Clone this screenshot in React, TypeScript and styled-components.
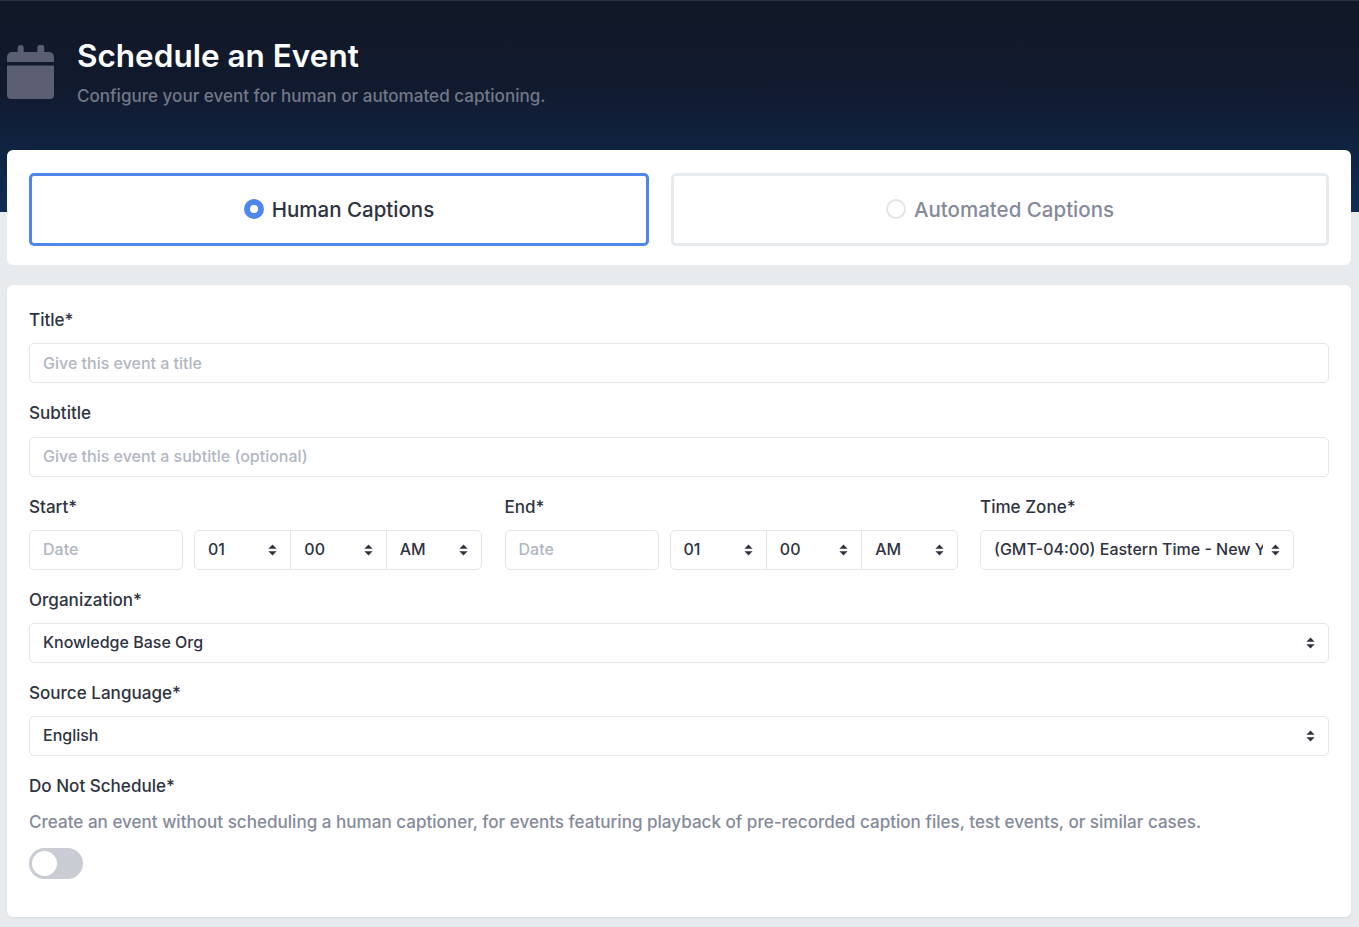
import styled, { createGlobalStyle } from 'styled-components'

const GlobalStyle = createGlobalStyle`
  * { box-sizing: border-box; }
  body {
    margin: 0;
    background: #e8ebee;
    font-family: Inter, "Noto Sans", sans-serif;
    color: #2f3340;
  }
`
const Hero = styled.header`
  height: 212px;
  padding: 37px 7px 0;
  display: flex;
  align-items: flex-start;
  gap: 23px;
  border-top: 1px solid #2b3040;
  background: linear-gradient(180deg, #111827 0%, #111a2e 40%, #0f2d55 100%);
`
const HeroIcon = styled.svg`
  width: 47px;
  height: 54px;
  margin-top: 7px;
  flex: none;
`
const HeroTitle = styled.h1`
  margin: 0;
  font-size: 31.5px;
  line-height: 36px;
  font-weight: 600;
  color: #fff;
`
const HeroSub = styled.p`
  margin: 10px 0 0;
  font-size: 17.07px;
  line-height: 24px;
  font-weight: 500;
  color: #737887;
`
const Main = styled.main`
  margin-top: -62px;
  padding: 0 8px 10px 7px;
  display: flex;
  flex-direction: column;
  gap: 20px;
  position: relative;
`
const Card = styled.section`
  background: #fff;
  border-radius: 6px;
`
const TypeCard = styled(Card)`
  height: 115px;
  padding: 23px 22px 19px;
  display: grid;
  grid-template-columns: 620px 658px;
  gap: 22px;
`
const TypeTile = styled.div<{ $active?: boolean }>`
  display: flex;
  align-items: center;
  justify-content: center;
  gap: 8px;
  padding-bottom: 1px;
  border: 3px solid ${p => (p.$active ? '#4f86ec' : '#e8ebee')};
  border-radius: 5px;
  font-size: 20.5px;
  font-weight: 500;
  color: ${p => (p.$active ? '#2f3340' : '#858a9b')};
`
const Radio = styled.span<{ $active?: boolean }>`
  width: 20px;
  height: 20px;
  border-radius: 50%;
  background: #fff;
  border: ${p => (p.$active ? '6px solid #4f86ec' : '2px solid #e2e5ea')};
`
const FormCard = styled(Card)`
  height: 632px;
  padding: 23px 22px 0;
  box-shadow: 0 1px 2px rgba(30, 40, 60, 0.08);
`
const Field = styled.div`
  margin-bottom: 18px;
`
const Label = styled.label`
  display: block;
  margin-bottom: 11.25px;
  font-size: 17.07px;
  line-height: 24px;
  font-weight: 500;
  color: #2f3340;
`
const TextInput = styled.input`
  display: block;
  width: 100%;
  height: 40px;
  padding: 0 13px 1px;
  border: 1px solid #e2e5ea;
  border-radius: 5px;
  background: #fff;
  font: 500 16px Inter, "Noto Sans", sans-serif;
  color: #2f3340;
  outline: none;
  &::placeholder {
    color: #b1b6c2;
    opacity: 1;
  }
`
const DateInput = styled(TextInput)`
  width: 154px;
  flex: none;
`
const DateRow = styled.div`
  display: grid;
  grid-template-columns: 453px 453px 1fr;
  gap: 22.5px;
`
const DateTime = styled.div`
  display: flex;
  gap: 11px;
`
const TimeGroup = styled.div`
  flex: 1;
  display: grid;
  grid-template-columns: repeat(3, 1fr);
  height: 40px;
  border: 1px solid #e2e5ea;
  border-radius: 5px;
`
const SelectWrap = styled.div<{ $width?: string }>`
  position: relative;
  width: ${p => p.$width ?? '100%'};
  & + & {
    border-left: 1px solid #e2e5ea;
  }
`
const SelectBox = styled.select<{ $bare?: boolean }>`
  display: block;
  width: 100%;
  height: ${p => (p.$bare ? '38px' : '40px')};
  padding: 0 30px ${p => (p.$bare ? '1px' : '2px')} 13px;
  appearance: none;
  border: ${p => (p.$bare ? 'none' : '1px solid #e2e5ea')};
  border-radius: 5px;
  background: transparent;
  font: 500 16px Inter, "Noto Sans", sans-serif;
  color: #2f3340;
  outline: none;
`
const Chevrons = styled.svg<{ $bare?: boolean }>`
  position: absolute;
  right: ${p => (p.$bare ? '13px' : '14px')};
  top: 50%;
  width: 9px;
  height: 12px;
  margin-top: -6px;
  pointer-events: none;
`
const Help = styled.p`
  margin: 0 0 14px;
  font-size: 17.07px;
  line-height: 24px;
  font-weight: 500;
  color: #858a9b;
`
const Toggle = styled.span`
  display: flex;
  align-items: center;
  width: 54px;
  height: 31px;
  padding: 3px;
  border-radius: 16px;
  background: #c9ccd3;
`
const Knob = styled.span`
  width: 25px;
  height: 25px;
  border-radius: 50%;
  background: #fff;
`

function Select({ value, width, bare }: { value: string; width?: string; bare?: boolean }) {
  return (
    <SelectWrap $width={width}>
      <SelectBox $bare={bare} defaultValue={value}>
        <option>{value}</option>
      </SelectBox>
      <Chevrons $bare={bare} viewBox="0 0 9 12">
        <path d="M4.5 0.5 8.6 4.8H0.4Z M4.5 11.5 0.4 7.2H8.6Z" fill="#2f3340" />
      </Chevrons>
    </SelectWrap>
  )
}

function DateTimeField({ label }: { label: string }) {
  return (
    <div>
      <Label>{label}</Label>
      <DateTime>
        <DateInput placeholder="Date" />
        <TimeGroup>
          <Select value="01" bare />
          <Select value="00" bare />
          <Select value="AM" bare />
        </TimeGroup>
      </DateTime>
    </div>
  )
}

export default function App() {
  return (
    <>
      <GlobalStyle />
      <Hero>
        <HeroIcon viewBox="0 0 47 54">
          <path
            d="M10.700 3a3 3 0 0 1 6 0v4h13.600V3a3.500 3.500 0 0 1 7 0v4H42a5 5 0 0 1 5 5v5H0v-5a5 5 0 0 1 5-5h5.700Z"
            fill="#5c5f73"
          />
          <path d="M0 20.500h47V50a4 4 0 0 1-4 4H4a4 4 0 0 1-4-4Z" fill="#5c5f73" />
        </HeroIcon>
        <div>
          <HeroTitle>Schedule an Event</HeroTitle>
          <HeroSub>Configure your event for human or automated captioning.</HeroSub>
        </div>
      </Hero>
      <Main>
        <TypeCard>
          <TypeTile $active>
            <Radio $active />
            Human Captions
          </TypeTile>
          <TypeTile>
            <Radio />
            Automated Captions
          </TypeTile>
        </TypeCard>
        <FormCard>
          <Field>
            <Label>Title*</Label>
            <TextInput placeholder="Give this event a title" />
          </Field>
          <Field>
            <Label>Subtitle</Label>
            <TextInput placeholder="Give this event a subtitle (optional)" />
          </Field>
          <Field>
            <DateRow>
              <DateTimeField label="Start*" />
              <DateTimeField label="End*" />
              <div>
                <Label>Time Zone*</Label>
                <Select value="(GMT-04:00) Eastern Time - New York" width="314px" />
              </div>
            </DateRow>
          </Field>
          <Field>
            <Label>Organization*</Label>
            <Select value="Knowledge Base Org" />
          </Field>
          <Field>
            <Label>Source Language*</Label>
            <Select value="English" />
          </Field>
          <Label>Do Not Schedule*</Label>
          <Help>
            Create an event without scheduling a human captioner, for events featuring playback of
            pre-recorded caption files, test events, or similar cases.
          </Help>
          <Toggle>
            <Knob />
          </Toggle>
        </FormCard>
      </Main>
    </>
  )
}
